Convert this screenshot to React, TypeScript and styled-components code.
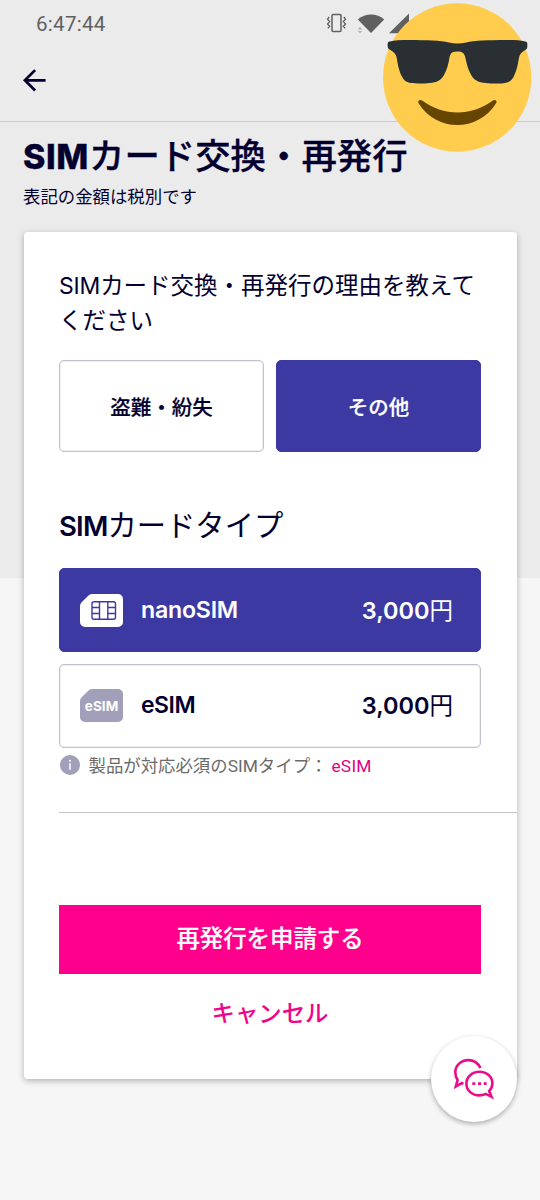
import React from 'react';
import styled, { createGlobalStyle } from 'styled-components';

const navy = '#03002f';
const indigo = '#3d39a3';
const magenta = '#ff008c';
const lilac = '#a19fba';

const GlobalStyle = createGlobalStyle`
  *, *::before, *::after { box-sizing: border-box; }
  body {
    margin: 0;
    background: linear-gradient(#ebebeb 578px, #f6f6f6 578px);
    color: ${navy};
    font-family: Roboto, 'Noto Sans CJK JP', sans-serif;
  }
  button { font: inherit; color: inherit; cursor: pointer; padding: 0; }
`;

const Screen = styled.div`
  position: relative;
  width: 540px;
  height: 1200px;
  overflow: hidden;
`;

const StatusBar = styled.div`
  display: flex;
  align-items: center;
  height: 48px;
  padding-left: 36px;
  color: #606060;
`;

const Clock = styled.span`
  width: 290px;
  font-size: 20.6px;
  letter-spacing: 0.25px;
`;

const StatusIcons = styled.svg`
  width: 90px;
  height: 30px;
`;

const AppBar = styled.header`
  display: flex;
  align-items: center;
  height: 74px;
  padding: 0 0 9px 22px;
  border-bottom: 1px solid #cbcbcb;
`;

const BackButton = styled.button`
  display: flex;
  border: 0;
  background: none;
`;

const Title = styled.h1`
  margin: 13px 0 0 23px;
  font-size: 35.4px;
  line-height: 44px;
  font-weight: 500;
  white-space: nowrap;
  -webkit-text-stroke: 0.3px ${navy};
`;

const TaxNote = styled.p`
  margin: 5px 0 0 23px;
  font-size: 17.4px;
  line-height: 26px;
`;

const Latin = styled.span<{ $size: number; $weight?: number; $spacing?: number }>`
  font-family: Inter, sans-serif;
  font-size: ${(p) => p.$size}px;
  font-weight: ${(p) => p.$weight ?? 600};
  letter-spacing: ${(p) => p.$spacing ?? 0}px;
  line-height: 1;
`;

const Card = styled.main`
  display: flex;
  flex-direction: column;
  width: 493px;
  height: 847px;
  margin: 22px 0 0 24px;
  padding: 37px 36px 0 35px;
  background: #fff;
  border-radius: 4px;
  box-shadow: 0 2px 6px rgba(0, 0, 20, 0.28);
`;

const Question = styled.p`
  margin: 0;
  font-size: 23.5px;
  line-height: 35px;
  white-space: nowrap;
`;

const Reasons = styled.div`
  display: grid;
  grid-template-columns: 1fr 1fr;
  gap: 12px;
  margin-top: 21px;
`;

const ReasonButton = styled.button<{ $selected?: boolean }>`
  height: 92px;
  border: 1px solid ${(p) => (p.$selected ? indigo : '#c2c1d0')};
  border-radius: 5px;
  background: ${(p) => (p.$selected ? indigo : '#fff')};
  color: ${(p) => (p.$selected ? '#fff' : navy)};
  font-size: 20.5px;
  font-weight: 500;
  -webkit-text-stroke: 0.2px;
  box-shadow: inset 0 0 0 0.5px ${(p) => (p.$selected ? indigo : '#dddce6')};
`;

const SectionTitle = styled.h2`
  margin: 53px 0 0;
  font-size: 29.3px;
  line-height: 42px;
  font-weight: 400;
  white-space: nowrap;
`;

const SimOption = styled.button<{ $selected?: boolean }>`
  display: flex;
  align-items: center;
  height: 84px;
  flex: none;
  padding: 0 27px 1px 20px;
  border: 1px solid ${(p) => (p.$selected ? indigo : '#c2c1d0')};
  border-radius: 5px;
  background: ${(p) => (p.$selected ? indigo : '#fff')};
  color: ${(p) => (p.$selected ? '#fff' : navy)};
  box-shadow: inset 0 0 0 0.5px ${(p) => (p.$selected ? indigo : '#dddce6')};
`;

const SimList = styled.div`
  display: flex;
  flex-direction: column;
  gap: 12px;
  margin-top: 21px;

  ${SimOption}:first-child {
    padding-top: 1px;
    padding-bottom: 0;
  }
`;

const SimName = styled.span`
  flex: 1;
  margin-left: 18px;
  text-align: left;
`;

const Price = styled.span`
  font-size: 23.5px;
  line-height: 36px;
`;

const Compatibility = styled.p`
  display: flex;
  align-items: center;
  height: 26px;
  margin: 4px 0 0 1px;
  color: #6b6b6b;
  font-size: 17.4px;
  white-space: nowrap;
`;

const InfoBadge = styled.svg`
  width: 20px;
  height: 20px;
  margin-right: 8.5px;
`;

const InfoText = styled.span`
  line-height: 24px;
  padding-top: 1px;
`;

const Highlight = styled.span`
  color: #e20082;
  margin-left: 4px;
  letter-spacing: 0.2px;
`;

const Divider = styled.hr`
  flex: none;
  height: 1px;
  margin: 34px -36px 0 0;
  border: 0;
  background: #c3c3ca;
`;

const SubmitButton = styled.button`
  flex: none;
  height: 69px;
  margin-top: 92px;
  padding-bottom: 5px;
  border: 0;
  background: ${magenta};
  color: #fff;
  font-size: 23.4px;
  font-weight: 500;
  -webkit-text-stroke: 0.2px;
`;

const CancelButton = styled.button`
  align-self: center;
  margin-top: 22px;
  border: 0;
  background: none;
  color: #f0058a;
  font-size: 23.4px;
  line-height: 36px;
  font-weight: 500;
`;

const ChatButton = styled.button`
  position: absolute;
  left: 431px;
  top: 1036px;
  display: flex;
  align-items: center;
  justify-content: center;
  width: 86px;
  height: 86px;
  padding-bottom: 2px;
  border: 0;
  border-radius: 50%;
  background: #fff;
  box-shadow: 0 2px 5px rgba(0, 0, 0, 0.3);
`;

const EmojiSticker = styled.svg`
  position: absolute;
  left: 383px;
  top: 3px;
  width: 149px;
  height: 149px;
`;

const SystemIcons = () => (
  <StatusIcons viewBox="0 0 90 30" fill="none">
    <g stroke="#606060" strokeWidth="1.5">
      <rect x="6" y="5.5" width="9" height="17" rx="1" />
      <path d="M3.2 8 1.5 10.2 3.7 12.6 1.5 15 3.7 17.2 1.8 19.4M17.8 8l1.7 2.2-2.2 2.4 2.2 2.4-2.2 2.2 1.9 2.2" strokeWidth="1.3" />
    </g>
    <path d="M31.8 10.500c7.400-6.800 19.200-6.800 26.400 0L45 24z" fill="#606060" />
    <path d="M63 24.200h20V4.500z" fill="#606060" />
    <path d="M31.700 20.400 34 17.800l2.300 2.600zM31.700 21.900l2.300 2.600 2.300-2.600z" fill="#b5b5b5" />
  </StatusIcons>
);

const BackArrow = () => (
  <svg width="26" height="26" viewBox="0 0 26 26" fill="none" stroke={navy} strokeWidth="2.7">
    <path d="M23.6 13.3H3.2M13.1 3.1 2.9 13.3l10.2 10.2" />
  </svg>
);

const cardShape = 'M12 0H38a5 5 0 0 1 5 5V28a5 5 0 0 1-5 5H5a5 5 0 0 1-5-5V12.5C0 10.7.6 9.4 1.9 8.1L8 2C9.3.7 10.4 0 12 0Z';

const NanoSimIcon = () => (
  <svg width="43" height="33" viewBox="0 0 43 33" fill="none">
    <path d={cardShape} fill="#fff" />
    <g stroke={indigo} strokeWidth="1.4">
      <rect x="12" y="7.8" width="23.5" height="17.5" rx="2" />
      <path d="M19.5 7.8v17.5M27.8 7.8v17.5M12 13.5h7.500M12 19.5h7.500M27.8 13.5h7.700M27.8 19.5h7.700" />
    </g>
  </svg>
);

const ESimIcon = () => (
  <svg width="43" height="33" viewBox="0 0 43 33">
    <path d={cardShape} fill={lilac} />
    <text x="21.5" y="21.5" textAnchor="middle" textLength="33.5" fill="#fff" fontFamily="Inter, sans-serif" fontWeight="700" fontSize="13.5">
      eSIM
    </text>
  </svg>
);

const InfoIcon = () => (
  <InfoBadge viewBox="0 0 20 20">
    <circle cx="10" cy="10" r="10" fill={lilac} />
    <path d="M10 8.2v6.500" stroke="#fff" strokeWidth="1.5" />
    <circle cx="10" cy="5.8" r="1" fill="#fff" />
  </InfoBadge>
);

const ChatIcon = () => (
  <svg width="44" height="44" viewBox="0 0 44 44" fill="none" stroke="#e80d8b" strokeWidth="2.6">
    <path d="M28.4 12.1C26.3 7.3 21.5 4.1 16.1 4.1 9.2 4.1 3.3 9.500 3.300 16.200c0 3.100.9 5.600 2.300 7.800L3.800 30.600l5.900-3.500 1.800.3" />
    <path d="M37.100 35.100c2.200-2.300 3.300-4.900 3.300-7.700 0-6.700-5.800-11.600-13-11.600s-13 5.100-13 11.900 5.800 11.700 13 11.700c2.400 0 4.400-.5 6.300-1.500l5.800 2.900z" />
    <path d="M20.300 27.600h3M26 27.600h3M31.700 27.600h3" strokeWidth="2.9" />
  </svg>
);

const SunglassesEmoji = () => (
  <EmojiSticker viewBox="340 10 444 446">
    <circle cx="561" cy="233" r="222" fill="#ffcc4d" />
    <path
      d="M353 132c0-4 2-6 6-7 14-3 32-4 57-4 54 0 96 2 120 7 17 4 35 4 52 0 24-5 66-7 120-7 25 0 43 1 57 4 4 1 6 3 6 7v8c0 5-2 7-5 10-12 7-18 13-20 24-4 26-8 41-16 57-8 16-20 20-49 20-27 0-46 0-61-8-17-9-27-36-32-59-5-22-6-29-27-29s-21 9-25 29c-5 23-14 50-31 59-15 8-34 8-61 8-29 0-40-4-48-20-8-15-12-31-16-57-2-11-8-17-20-24-4-3-7-5-7-10z"
      fill="#292f33"
    />
    <path d="M445 309c-3-7 5-12 11-7 65 48 147 48 212 0 6-5 14 0 10 7-55 88-178 88-233 0z" fill="#664500" />
  </EmojiSticker>
);

export default function App() {
  return (
    <Screen>
      <GlobalStyle />
      <StatusBar>
        <Clock>6:47:44</Clock>
        <SystemIcons />
      </StatusBar>
      <AppBar>
        <BackButton aria-label="戻る">
          <BackArrow />
        </BackButton>
      </AppBar>
      <Title>
        <Latin $size={34} $weight={800} $spacing={0.6}>SIM</Latin>カード交換・再発行
      </Title>
      <TaxNote>表記の金額は税別です</TaxNote>
      <Card>
        <Question>
          <Latin $size={23} $weight={400} $spacing={-0.2}>SIM</Latin>カード交換・再発行の理由を教えて
          <br />
          ください
        </Question>
        <Reasons>
          <ReasonButton>盗難・紛失</ReasonButton>
          <ReasonButton $selected>その他</ReasonButton>
        </Reasons>
        <SectionTitle>
          <Latin $size={27.5} $spacing={-0.8}>SIM</Latin>カードタイプ
        </SectionTitle>
        <SimList>
          <SimOption $selected>
            <NanoSimIcon />
            <SimName><Latin $size={23.2} $spacing={-0.25}>nanoSIM</Latin></SimName>
            <Price><Latin $size={23.5}>3,000</Latin>円</Price>
          </SimOption>
          <SimOption>
            <ESimIcon />
            <SimName><Latin $size={23} $spacing={-0.5}>eSIM</Latin></SimName>
            <Price><Latin $size={23.5}>3,000</Latin>円</Price>
          </SimOption>
        </SimList>
        <Compatibility>
          <InfoIcon />
          <InfoText>
            製品が対応必須のSIMタイプ：<Highlight>eSIM</Highlight>
          </InfoText>
        </Compatibility>
        <Divider />
        <SubmitButton>再発行を申請する</SubmitButton>
        <CancelButton>キャンセル</CancelButton>
      </Card>
      <ChatButton aria-label="チャット">
        <ChatIcon />
      </ChatButton>
      <SunglassesEmoji />
    </Screen>
  );
}
